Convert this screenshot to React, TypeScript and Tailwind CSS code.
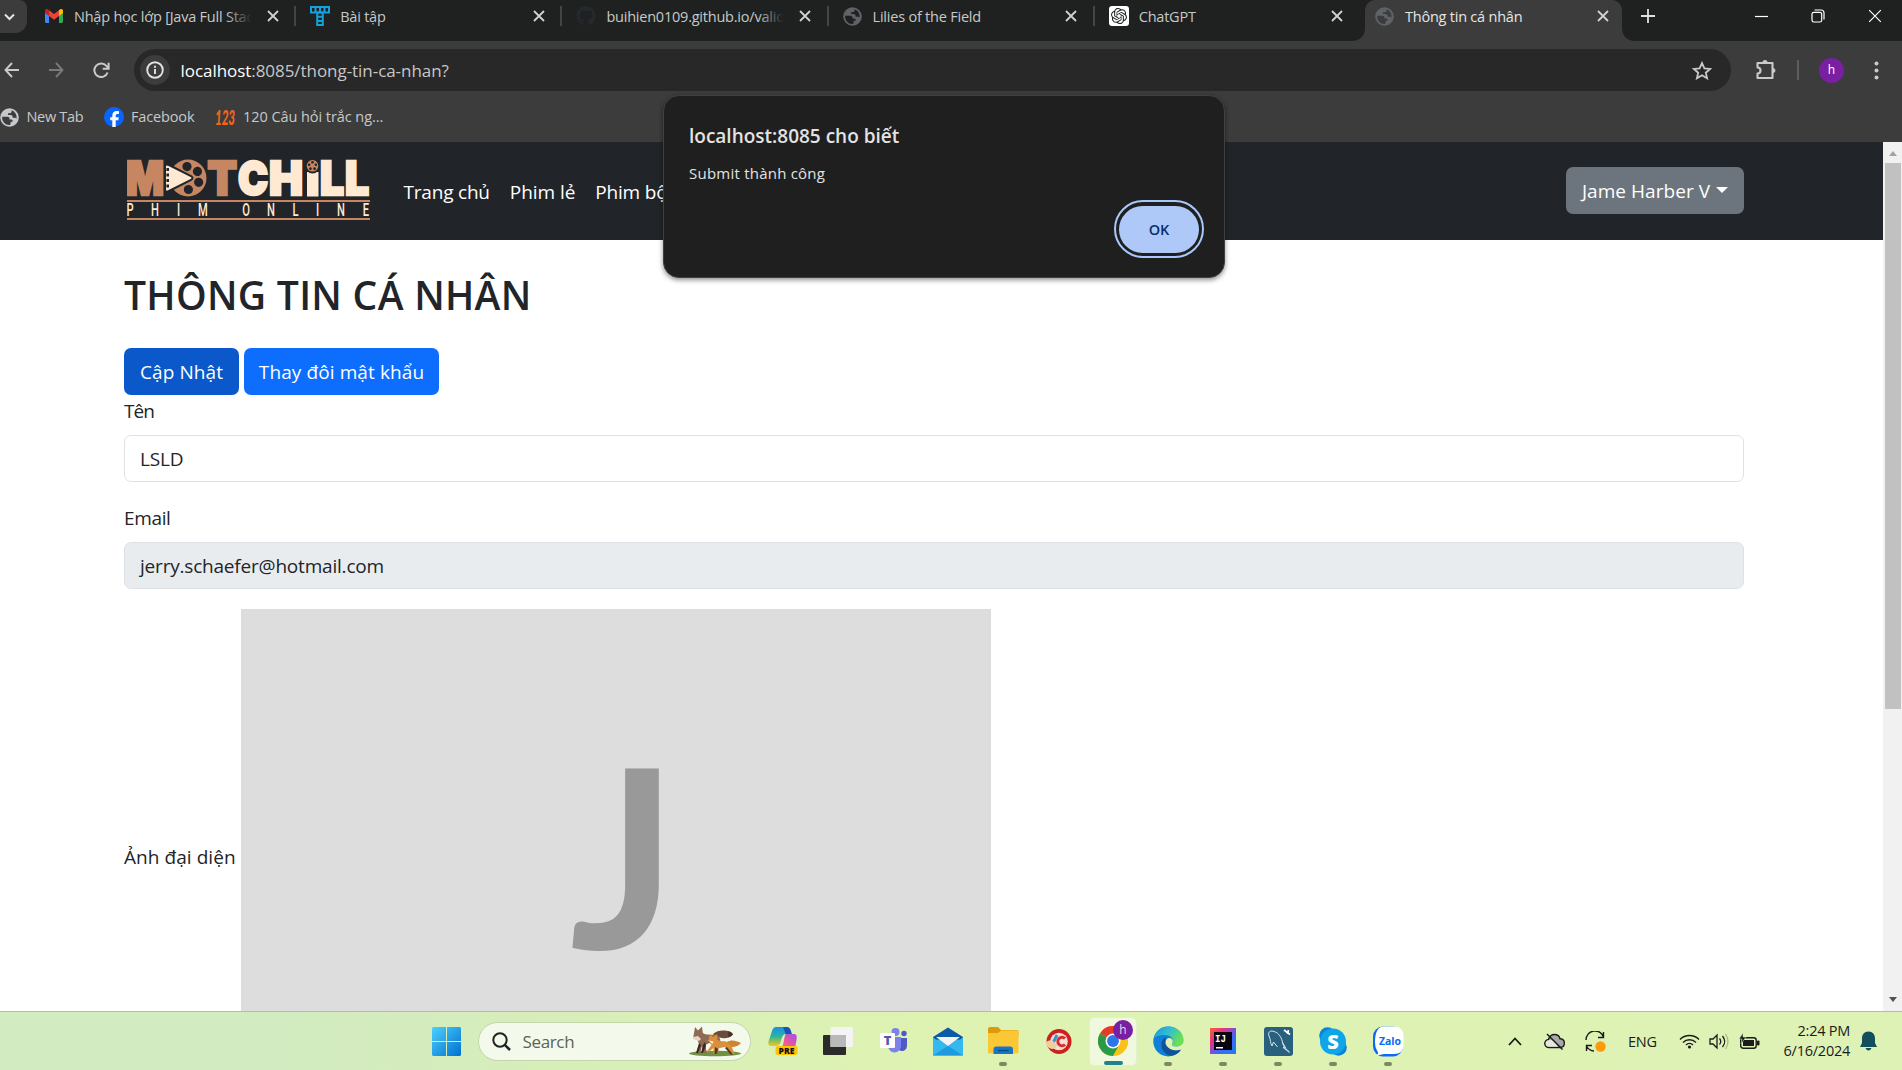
import type { ReactNode } from "react";
import { FaGithub } from "react-icons/fa";
import { SiOpenai } from "react-icons/si";

/* ---------- small glyphs ---------- */

function Cross({ size = 12, w = 1.8 }: { size?: number; w?: number }) {
  return (
    <svg width={size} height={size} viewBox="0 0 12 12" stroke="currentColor" strokeWidth={w} fill="none">
      <path d="M1 1l10 10M11 1L1 11" />
    </svg>
  );
}

function Globe({ color, ink }: { color: string; ink: string }) {
  return (
    <svg width="19" height="19" viewBox="0 0 20 20">
      <circle cx="10" cy="10" r="9.8" fill={color} />
      <path
        d="M2.2 9.2h5.6c1.3 0 2.2.8 2.2 2v.9h1.4c1.2 0 2 .7 2 1.9v.6h-2.2v1.6c0 .9-.5 1.5-1.6 1.8A8 8 0 0 1 2.2 9.2z"
        fill={ink}
      />
      <path
        d="M12.2 2.3v1.2c0 1.2-.8 2-2 2H8.400v1.800h2.900c1.200 0 2 .8 2 2v1h2.200c.9 0 1.600.5 1.900 1.300A8 8 0 0 0 12.2 2.300z"
        fill={ink}
      />
    </svg>
  );
}

function Gmail() {
  return (
    <svg width="18" height="14" viewBox="0 0 18 14">
      <path d="M0 2v10.800c0 .7.500 1.200 1.200 1.200H4V5z" fill="#4285f4" />
      <path d="M18 2v10.800c0 .7-.5 1.200-1.200 1.200H14V5z" fill="#34a853" />
      <path d="M14 1.200V7l4-3V1.800C18 .2 16.200-.5 15 .4z" fill="#fbbc04" />
      <path d="M4 7V1.200L9 5l5-3.800V7l-5 3.800z" fill="#ea4335" />
      <path d="M0 1.800V4l4 3V1.200L3 .4C1.800-.5 0 .2 0 1.800z" fill="#c5221f" />
    </svg>
  );
}

function GridT() {
  return (
    <svg width="20" height="20" viewBox="0 0 20 20" fill="none" stroke="#14a0dc" strokeWidth="2">
      <rect x="1" y="1" width="18" height="5.500" />
      <path d="M5.500 1v5.500M10 1v5.500M14.500 1v5.500" />
      <rect x="7.200" y="6.500" width="5.600" height="12.500" />
      <path d="M7.200 10.700h5.600M7.200 14.900h5.600" />
    </svg>
  );
}

/* ---------- browser tabs ---------- */

function Tab({
  icon,
  title,
  divider = true,
  fade = false,
  tone = "text-[#c7c9c8]",
}: {
  icon: ReactNode;
  title: string;
  divider?: boolean;
  fade?: boolean;
  tone?: string;
}) {
  return (
    <div className="relative flex h-[32px] w-[266.200px] shrink-0 items-center pl-[14px]">
      <span className="flex h-5 w-5 shrink-0 items-center justify-center">{icon}</span>
      <span className={`ml-[10px] w-[178.500px] overflow-hidden whitespace-nowrap pt-px text-[14.500px] leading-[22px] tracking-[-0.220px] ${tone}`}>{title}</span>
      <span className="ml-[14px] flex text-[#d0d2d1]">
        <Cross />
      </span>
      {fade && <span className="absolute left-[196px] top-1 h-6 w-[27px] bg-linear-to-r from-transparent to-[#1f2120] to-95%" />}
      {divider && <span className="absolute right-0 top-[6px] h-5 w-[2px] bg-[#434544]" />}
    </div>
  );
}

function TabStrip() {
  return (
    <div className="flex h-[41px] shrink-0 bg-[#1f2120]">
      <div className="flex h-[33px] w-[30px] shrink-0">
        <div className="flex w-[27px] items-center rounded-br-[12px] rounded-tr-[8px] bg-[#3c3c3c] pl-1">
          <svg width="11" height="8" viewBox="0 0 11 8" fill="none" stroke="#e3e3e3" strokeWidth="2">
            <path d="M1 1.500l4.500 4.500L10 1.500" />
          </svg>
        </div>
      </div>
      <Tab icon={<Gmail />} title="Nhập học lớp [Java Full Stack]" fade />
      <Tab icon={<GridT />} title="Bài tập" />
      <Tab icon={<FaGithub size={20} color="#24292f" />} title="buihien0109.github.io/validate" fade />
      <Tab icon={<Globe color="#5f6368" ink="#1f2120" />} title="Lilies of the Field" />
      <Tab
        icon={
          <span className="flex h-5 w-5 items-center justify-center rounded-[3px] bg-white">
            <SiOpenai size={16} color="#222" />
          </span>
        }
        title="ChatGPT"
        divider={false}
      />
      <div className="relative ml-[4px] flex h-[41px] w-[257px] shrink-0 rounded-t-[10px] bg-[#3c3c3c]">
        <svg className="absolute -left-[13px] bottom-0" width="13" height="13" viewBox="0 0 13 13">
          <path d="M13 0v13H0C7.500 13 13 8 13 0z" fill="#3c3c3c" />
        </svg>
        <svg className="absolute -right-[13px] bottom-0" width="13" height="13" viewBox="0 0 13 13">
          <path d="M0 0v13h13C5.500 13 0 8 0 0z" fill="#3c3c3c" />
        </svg>
        <div className="-ml-[4px]">
          <Tab icon={<Globe color="#5f6368" ink="#3c3c3c" />} title="Thông tin cá nhân" divider={false} tone="text-[#e6e6e6]" />
        </div>
      </div>
      <div className="flex h-[32px] grow items-center text-[#e0e0e0]">
        <svg className="ml-[19px]" width="14" height="14" viewBox="0 0 14 14" stroke="currentColor" strokeWidth="1.800">
          <path d="M7 0v14M0 7h14" />
        </svg>
        <svg className="ml-[100px]" width="13" height="13" viewBox="0 0 13 13" stroke="white" strokeWidth="1.200">
          <path d="M0 6.500h13" />
        </svg>
        <svg className="ml-[43px]" width="14" height="14" viewBox="0 0 14 14" stroke="white" strokeWidth="1.200" fill="none">
          <rect x="1" y="3.300" width="9.700" height="9.700" rx="1.800" />
          <path d="M3.500 1h6.500a3 3 0 0 1 3 3v6.500" />
        </svg>
        <span className="ml-[43px] flex text-white">
          <Cross size={14} w={1} />
        </span>
      </div>
    </div>
  );
}

/* ---------- address bar and bookmarks ---------- */

function Toolbar() {
  return (
    <div className="flex h-[58px] shrink-0 items-center bg-[#3c3c3c] text-[#c9cbca]">
      <svg className="ml-[4px] shrink-0" width="15" height="16" viewBox="0 0 15 16" fill="none" stroke="currentColor" strokeWidth="1.900">
        <path d="M15 8H1.500M8 1L1.500 8L8 15" />
      </svg>
      <svg className="ml-[30px] shrink-0 text-[#7a7a7a]" width="15" height="16" viewBox="0 0 15 16" fill="none" stroke="currentColor" strokeWidth="1.900">
        <path d="M0 8h13.500M7 1l6.500 7L7 15" />
      </svg>
      <svg className="ml-[29px] shrink-0" width="17" height="17" viewBox="0 0 17 17" fill="none" stroke="currentColor" strokeWidth="2">
        <path d="M14.600 10.500A6.800 6.800 0 1 1 13.500 4L15.500 6" />
        <path d="M15.600 .8v5.900H9.700" />
      </svg>
      <div className="ml-[24px] flex h-[42px] w-[1597px] shrink-0 items-center rounded-full bg-[#282828]">
        <span className="ml-[6px] flex h-[30px] w-[30px] items-center justify-center rounded-full bg-[#3c3c3c]">
          <svg width="18" height="18" viewBox="0 0 18 18" fill="none" stroke="#e3e3e3" strokeWidth="1.900">
            <circle cx="9" cy="9" r="7.800" />
            <path d="M9 8v5M9 4.800v1.900" />
          </svg>
        </span>
        <span className="ml-[10.500px] pt-px text-[17px] tracking-[-0.050px] text-[#c7c7c7]">
          <span className="text-white">localhost</span>:8085/thong-tin-ca-nhan?
        </span>
        <svg className="ml-auto mr-[19px]" width="20" height="19" viewBox="0 0 20 19" fill="none" stroke="currentColor" strokeWidth="1.800">
          <path d="M10 2l2.400 5.300 5.800.6-4.400 3.800 1.300 5.600L10 14.300l-5.100 3 1.300-5.600L1.800 7.900l5.800-.6z" />
        </svg>
      </div>
      <svg className="ml-[24px] shrink-0" width="22" height="22" viewBox="0 0 22 22">
        <path d="M2.500 4h15v15h-15v-4.500a3 3 0 0 0 0-6z" fill="none" stroke="currentColor" strokeWidth="2.100" strokeLinejoin="round" />
        <path d="M7.500 3.500a2.500 2.500 0 0 1 5 0zM18 9a2.500 2.500 0 0 1 0 5z" fill="currentColor" />
      </svg>
      <span className="ml-[20px] h-5 w-[2px] shrink-0 bg-[#5c5e5e]" />
      <span className="ml-[20px] flex h-[25px] w-[25px] shrink-0 items-center justify-center rounded-full bg-[#7b1fa2] text-[12px] text-white">h</span>
      <svg className="ml-[30px] shrink-0" width="5" height="19" viewBox="0 0 5 19" fill="currentColor">
        <circle cx="2.500" cy="2.500" r="2" />
        <circle cx="2.500" cy="9.500" r="2" />
        <circle cx="2.500" cy="16.500" r="2" />
      </svg>
    </div>
  );
}

function Bookmarks() {
  return (
    <div className="flex h-[43px] shrink-0 items-center bg-[#3c3c3c] pb-[7px] text-[14.500px] tracking-[-0.300px] text-[#c7c9c8]">
      <Globe color="#c5c9ce" ink="#3c3c3c" />
      <span className="ml-[7.500px] w-[77.500px]">New Tab</span>
      <svg width="20" height="20" viewBox="0 0 20 20">
        <circle cx="10" cy="10" r="10" fill="#0866ff" />
        <path d="M8.300 20v-6.700H6.200v-3h2.100V9c0-3.300 1.500-4.900 4.700-4.900.6 0 1.600.1 2 .2V7h-1.100c-1.600 0-2.200.6-2.200 2.100v1.200h3.100l-.5 3h-2.600V20z" fill="white" />
      </svg>
      <span className="ml-[7px] w-[84px] tracking-[-0.150px]">Facebook</span>
      <svg width="20" height="18" viewBox="0 0 20 18">
        <text x="0" y="16.500" textLength="20" lengthAdjust="spacingAndGlyphs" fill="#f2661c" fontFamily="Lato, sans-serif" fontWeight="900" fontStyle="italic" fontSize="21">
          123
        </text>
      </svg>
      <span className="ml-[8px] tracking-[-0.060px]">120 Câu hỏi trắc ng...</span>
    </div>
  );
}

/* ---------- web page ---------- */

function Logo() {
  const tag: [string, number][] = [
    ["P", 3], ["H", 28], ["I", 51.5], ["M", 76], ["O", 119], ["N", 144], ["L", 168.500], ["I", 190.500], ["N", 214], ["E", 239],
  ];
  return (
    <svg width="244" height="62" viewBox="0 0 244 62">
      <g fontFamily="Inter, sans-serif" fontWeight="900" fontSize="47" strokeWidth="2.600">
        <g fill="#c68662" stroke="#c68662">
          <text x="-1" y="36.200" textLength="38" lengthAdjust="spacingAndGlyphs">M</text>
          <text x="80.500" y="36.200" textLength="29.500" lengthAdjust="spacingAndGlyphs">T</text>
        </g>
        <g fill="#ffe9d2" stroke="#ffe9d2">
          <text x="111" y="36.200" textLength="30" lengthAdjust="spacingAndGlyphs">C</text>
          <text x="142" y="36.200" textLength="34" lengthAdjust="spacingAndGlyphs">H</text>
          <text x="193" y="36.200" textLength="24" lengthAdjust="spacingAndGlyphs">L</text>
          <text x="218" y="36.200" textLength="24" lengthAdjust="spacingAndGlyphs">L</text>
        </g>
      </g>
      <rect x="180" y="13" width="11.500" height="24.500" fill="#ffe9d2" />
      <circle cx="185.500" cy="7" r="7.500" fill="#212529" />
      <circle cx="185.500" cy="6.800" r="5.800" fill="#c68662" />
      {[0, 72, 144, 216, 288].map((a) => (
        <circle key={a} cx="185.500" cy="3.300" r="1.300" fill="#212529" transform={`rotate(${a} 185.500 6.800)`} />
      ))}
      <circle cx="61" cy="19" r="18.500" fill="#c68662" />
      {[-5, 55, 112, 178].map((a) => (
        <circle key={a} cx="61" cy="7.500" r="4.600" fill="#212529" transform={`rotate(${a} 61 19)`} />
      ))}
      <path d="M38 6.500q1-2 4-.5l22 11q3 2 0 4l-22 11q-3 1.500-4-.5z" fill="#ffe9d2" stroke="#212529" strokeWidth="2" />
      <path d="M40.700 9v22" stroke="#212529" strokeWidth="2.600" strokeDasharray="3 2.500" />
      <path d="M0 42h243M0 60h243" stroke="#c68662" strokeWidth="2.200" />
      <g fill="#ffe9d2" fontFamily="Roboto, sans-serif" fontWeight="500" fontSize="18" textAnchor="middle">
        {tag.map(([c, x], i) => (
          <text key={i} x="0" y="57.500" transform={`translate(${x} 0) scale(.62 1)`}>
            {c}
          </text>
        ))}
      </g>
    </svg>
  );
}

function Navbar() {
  return (
    <div className="flex h-[98px] shrink-0 items-center bg-[#212529] pl-[124px] pr-[139px] pb-px text-[19px] text-white">
      <div className="ml-[3px] mb-px flex">
        <Logo />
      </div>
      <nav className="ml-[32.500px] mt-[4px] flex gap-[20px] whitespace-nowrap tracking-[-0.200px]">
        <span>Trang chủ</span>
        <span className="tracking-[-0.050px]">Phim lẻ</span>
        <span>Phim bộ</span>
      </nav>
      <button className="ml-auto flex h-[47px] w-[178px] items-center justify-center rounded-[7px] bg-[#6c757d] pt-[2px] tracking-[0.050px]">
        Jame Harber V
        <span className="mb-[4px] ml-[6px] border-x-6 border-t-6 border-x-transparent border-t-white" />
      </button>
    </div>
  );
}

function ProfilePage() {
  return (
    <div className="flex grow flex-col overflow-hidden bg-white pl-[124px] pr-[139px] text-[19px] tracking-[-0.200px] text-[#212529]">
      <h1 className="mt-[31px] h-[49px] shrink-0 text-[39px] font-semibold leading-[48px] tracking-[0.300px]">THÔNG TIN CÁ NHÂN</h1>
      <div className="mt-[28px] flex shrink-0 gap-[5px] tracking-[0.100px] text-white">
        <button className="h-[47px] w-[115px] rounded-[7px] bg-[#0a58ca] pt-px">Cập Nhật</button>
        <button className="h-[47px] w-[195px] rounded-[7px] bg-[#0d6efd] pt-px">Thay đôi mật khẩu</button>
      </div>
      <label className="mt-[1px] block h-[30px] shrink-0 leading-[30px] tracking-[-1px]">Tên</label>
      <div className="mt-[9px] flex h-[47px] shrink-0 items-center rounded-[7px] border border-[#dee2e6] px-[15px] pt-px">LSLD</div>
      <label className="mt-[20px] block h-[30px] shrink-0 leading-[32px] tracking-[-0.350px]">Email</label>
      <div className="mt-[10px] flex h-[47px] shrink-0 items-center rounded-[7px] border border-[#dee2e6] bg-[#e9ecef] px-[15px] pt-px">jerry.schaefer@hotmail.com</div>
      <div className="mt-[20px] flex h-[500px] shrink-0 items-center">
        <span className="w-[117px] whitespace-nowrap pb-[4px] tracking-[0.060px]">Ảnh đại diện</span>
        <div className="flex h-[500px] w-[750px] items-center justify-center bg-[#ddd] pb-[15px] pl-[15px] font-[Lato] text-[250px] font-bold leading-none tracking-normal text-[#999]">J</div>
      </div>
    </div>
  );
}

function Scrollbar() {
  return (
    <div className="flex w-[19px] shrink-0 flex-col items-center bg-[#f1f1f1]">
      <span className="mt-[9px] border-x-4 border-b-5 border-x-transparent border-b-[#a3a3a3]" />
      <span className="mt-[7px] h-[546px] w-[16px] bg-[#c1c1c1]" />
      <span className="mt-auto mb-[9px] border-x-4 border-t-5 border-x-transparent border-t-[#505050]" />
    </div>
  );
}

function AlertDialog() {
  return (
    <div className="absolute left-[663px] top-[95px] flex h-[183px] w-[562px] flex-col rounded-[16px] border border-[#3f4140] bg-[#1f1f1f] px-[25px] text-[#e3e3e3] shadow-[0_2px_5px_rgba(0,0,0,0.45)]">
      <div className="mt-[27px] text-[19px] font-semibold leading-[26px] tracking-[0px]">localhost:8085 cho biết</div>
      <div className="mt-[13px] text-[15px] leading-[22px] tracking-[0.230px]">Submit thành công</div>
      <div className="-mr-[5px] mt-[16px] flex h-[58px] w-[90px] items-center justify-center self-end rounded-full border-[2.500px] border-[#a8c7fa]">
        <button className="h-[47px] w-[80px] rounded-full bg-[#aec9f8] pt-px text-[14.500px] font-semibold text-[#062e6f]">OK</button>
      </div>
    </div>
  );
}

/* ---------- taskbar ---------- */

function Foxes() {
  return (
    <svg width="54" height="32" viewBox="0 0 54 32">
      <ellipse cx="27" cy="28.500" rx="26" ry="2.800" fill="#70913f" />
      <path d="M25 9c3-3 8-4 12-3.500 4 .2 7 2 8 4-3 3-7 4.500-11 3.500-4-.5-7-1-9-4z" fill="#6c4b3d" />
      <path d="M40 6.200c3 .5 4.500 1.800 5 3.300-1.500 1.500-3 2.500-4.500 3z" fill="#49332b" />
      <path d="M5.500 11L7 2l3 3.500L14 1.500l.8 6.500c5 3 10 .5 16 3l1.500 4-1 5-1.500 8h-2l-.5-8-6-2-4 2 1.500 8h-2.500L14 21l-2 8H9l2.500-9-2-5-4.500-1.500z" fill="#8e6a55" />
      <path d="M17 17l1 4-3 7h-2l2-8zM11 18l2 2-3 8H8z" fill="#3a2924" />
      <path d="M5 12l5-1 3 3-2 2-6-2.500z" fill="#e8d6c4" />
      <path d="M38 17.500c5-3 9-2.500 15 .5-3 3.500-9 5.500-14 3z" fill="#cf8432" />
      <path d="M20.500 15l1.500-6 3 3 4-3 .5 6c4 2 8 .5 10 2.500l4 3.500 3 8h-2l-5-6-3-1-7 1.500-2 5.500h-2l0-6-5 4h-2l5-7-2-4-3.500-1z" fill="#d98f3b" />
      <path d="M20.500 15.500l5 1-1 2.500z" fill="#fff0d8" />
      <path d="M27 22l-.5 7h2l1.500-5zM39 22l6 7.500h-2.500L37 23z" fill="#5a351c" />
    </svg>
  );
}

function Slot({ children, dot = false }: { children: ReactNode; dot?: boolean }) {
  return (
    <div className="relative flex h-[59px] w-[55px] shrink-0 items-center justify-center">
      {children}
      {dot && <span className="absolute bottom-[5px] h-[4px] w-[8px] rounded-full bg-[#7c8a62]" />}
    </div>
  );
}

function Copilot() {
  return (
    <svg width="30" height="30" viewBox="0 0 30 30">
      <defs>
        <linearGradient id="cpA" x1="0" y1="0" x2="0" y2="1">
          <stop offset="0" stopColor="#1a8fe8" />
          <stop offset=".5" stopColor="#2bb69a" />
          <stop offset="1" stopColor="#f4c91f" />
        </linearGradient>
        <linearGradient id="cpB" x1="1" y1="0" x2="0" y2="1">
          <stop offset="0" stopColor="#a04bf0" />
          <stop offset=".6" stopColor="#ea5a9a" />
          <stop offset="1" stopColor="#f5853f" />
        </linearGradient>
      </defs>
      <path d="M8 1h10c3 0 4 3 5 7h-5c-3 0-4 3-5 7-1 3-2 5-5 5H3c-3 0-3-3-2-6l3-9c1-3 2-4 4-4z" fill="url(#cpA)" />
      <path d="M15 1h4c3 0 4 3 5 8h-6z" fill="#1554b8" />
      <path d="M18 8h8c3 0 3 3 2.500 6L27 22H12c3 0 3-4 4-8 .5-3 1-5 2-6z" fill="url(#cpB)" />
      <rect x="7.500" y="20" width="22" height="9" rx="2" fill="#ffc400" />
      <text x="10.500" y="27.500" textLength="16" fontFamily="Open Sans, sans-serif" fontWeight="800" fontSize="8.500" fill="#111">PRE</text>
    </svg>
  );
}

function Teams() {
  return (
    <svg width="27" height="28" viewBox="0 0 27 28">
      <circle cx="15.500" cy="5" r="4" fill="#7b83eb" />
      <circle cx="24" cy="6.500" r="2.700" fill="#5059c9" />
      <path d="M19 11h8v8a5 5 0 0 1-8 4z" fill="#5059c9" />
      <path d="M8 10h13v9a6.500 6.500 0 0 1-13 0z" fill="#7b83eb" />
      <rect x="0" y="6" width="15" height="15" rx="1" fill="white" />
      <text x="7.600" y="18.200" textAnchor="middle" fontFamily="Open Sans, sans-serif" fontWeight="800" fontSize="13" fill="#5558af">T</text>
    </svg>
  );
}

function Mail() {
  return (
    <svg width="30" height="29" viewBox="0 0 30 29">
      <path d="M0 10L15 .5 30 10z" fill="#0a5ba8" />
      <path d="M0 10h30v18.500H0z" fill="#35b8ee" />
      <path d="M0 10h30l-3 2.500H3z" fill="#0a4f96" />
      <path d="M3 10h24L15 19z" fill="#f3f3f3" />
      <path d="M10 22l5-3 15 9.500H0z" fill="#1f9ae0" />
    </svg>
  );
}

function Explorer() {
  return (
    <svg width="31" height="28" viewBox="0 0 31 28">
      <path d="M0 2q0-2 2-2h8l3 3h16q1.500 0 1.500 2v5H0z" fill="#dc9a0c" />
      <path d="M0 6h10l3-2.500h16q1.500 0 1.500 2V25q0 1.500-1.500 1.500H1.500Q0 26.500 0 25z" fill="#fcc735" />
      <path d="M5.500 27v-4.500q0-3 3-3h13.500q3 0 3 3V27z" fill="#1675c9" />
      <path d="M10 23.500h10.500" stroke="#0a4b8a" strokeWidth="1.500" />
    </svg>
  );
}

function CCleaner() {
  return (
    <svg width="27" height="27" viewBox="0 0 27 27">
      <circle cx="14" cy="13.500" r="12.500" fill="#c9211e" />
      <circle cx="14" cy="13.500" r="8.800" fill="#f7dcd6" />
      <path d="M20 10.500a4.200 4.200 0 1 0 0 6" fill="none" stroke="#d3302c" strokeWidth="3" />
      <path d="M12 7L8 15" stroke="#3c8fd0" strokeWidth="3" />
      <path d="M1 14q4-3 7-1l4 4q-1 4-5 4-4-1-6-4z" fill="#f3cda2" />
    </svg>
  );
}

function ChromeLogo() {
  return (
    <svg width="30" height="30" viewBox="0 0 48 48">
      <circle cx="24" cy="24" r="24" fill="#fbc116" />
      <path d="M24 24L3.200 12A24 24 0 0 1 44.800 12z" fill="#e33b2e" />
      <path d="M3.200 12A24 24 0 0 0 24 48l10.400-18z" fill="#2a9a47" />
      <path d="M24 12h20.800A24 24 0 0 1 24 48l10.400-18z" fill="#fbc116" />
      <circle cx="24" cy="24" r="12" fill="white" />
      <circle cx="24" cy="24" r="9.500" fill="#2f74e8" />
    </svg>
  );
}

function Edge() {
  return (
    <svg width="31" height="31" viewBox="0 0 31 31">
      <defs>
        <linearGradient id="eg" x1="0" y1="0" x2="1" y2=".5">
          <stop offset="0" stopColor="#1d8fdc" />
          <stop offset=".5" stopColor="#2fbfd0" />
          <stop offset="1" stopColor="#6ee04f" />
        </linearGradient>
      </defs>
      <circle cx="15.300" cy="15.500" r="15" fill="#0f80d7" />
      <path d="M.5 13C2 5 8 .5 15.500.5c9 0 15 6.500 15 13 0 4.500-3.500 7-7.500 7-3 0-4-1-4-2 0-1 1-1.500 1-3.500 0-3-3-6-8-6S2 10 .5 13z" fill="url(#eg)" />
      <path d="M12.500 11c-3 2-4.500 5-4 9 .6 5.500 5 9.500 10 9.800 4-.5 7.500-3 9.500-6.300-6 2.500-13 .5-15-5-.7-2.500-.7-5-.5-7.500z" fill="#11529d" />
      <path d="M19 18.500c0 1 1 2 4 2 3.500 0 6.500-1.500 7.800-5.500v7l-3 2c-6 2-13 0-15-5.500-.8-4 1-6.500 3.500-6.500 2 0 3.500 1.500 3.500 3 0 2-.8 2.500-.8 3.500z" fill="#def2b4" />
      <path d="M12.800 18c2 5.500 9 7.800 15 5.500l-2 2.700c-6 2-12.500-2-13-8.200z" fill="#11529d" />
    </svg>
  );
}

function IntelliJ() {
  return (
    <svg width="26" height="26" viewBox="0 0 26 26">
      <defs>
        <linearGradient id="ij" x1="0" y1="0" x2="1" y2="1">
          <stop offset="0" stopColor="#f0682a" />
          <stop offset=".3" stopColor="#e6318b" />
          <stop offset=".6" stopColor="#4067f5" />
          <stop offset="1" stopColor="#1d7ff0" />
        </linearGradient>
      </defs>
      <rect width="26" height="26" fill="url(#ij)" />
      <rect x="4" y="4" width="18" height="18" fill="#090510" />
      <text x="5" y="13.500" textLength="11" lengthAdjust="spacingAndGlyphs" fontFamily="Liberation Mono, monospace" fontWeight="700" fontSize="10.500" fill="white">IJ</text>
      <rect x="6" y="19" width="7" height="1.500" fill="white" />
    </svg>
  );
}

function MySQL() {
  return (
    <svg width="29" height="29" viewBox="0 0 29 29">
      <rect width="29" height="29" rx="3" fill="#28607e" />
      <path d="M8 19c-2-3-1-6-3-10-1-3 0-5 3-5 6 1 9 5 10.500 11 .5 3 1 5 7 10M8 19l1.500-4 4 5M18.500 15.500l3 5-2.500 0 6.500 5" stroke="#d6e5ec" strokeWidth="1" fill="none" />
      <path d="M20 3l6 4.500M24.500 3l-1 4" stroke="white" strokeWidth="1.700" />
    </svg>
  );
}

function Skype() {
  return (
    <svg width="28" height="29" viewBox="0 0 28 29">
      <circle cx="8.500" cy="8.500" r="8.300" fill="#0a84d8" />
      <circle cx="19.500" cy="20.500" r="8.300" fill="#0a84d8" />
      <circle cx="14" cy="14.500" r="13" fill="#0ea5e9" />
      <text x="14" y="21.700" textAnchor="middle" fontFamily="Open Sans, sans-serif" fontWeight="800" fontSize="20" fill="white">S</text>
    </svg>
  );
}

function Zalo() {
  return (
    <svg width="31" height="31" viewBox="0 0 31 31">
      <rect x="0" y=".5" width="30" height="30" rx="10" fill="#0a6af5" />
      <path d="M11 .5h10q9.500 0 9.500 9.500v9q0 9-9.500 9H11l-7 1.500q2-2.500 0-5-2-3-2-8Q2 .5 11 .5z" fill="white" />
      <text x="6" y="18.500" textLength="22" lengthAdjust="spacingAndGlyphs" fontFamily="Open Sans, sans-serif" fontWeight="700" fontSize="10.500" fill="#0a6af5">Zalo</text>
    </svg>
  );
}

function Tray() {
  return (
    <div className="ml-auto flex shrink-0 items-center text-[#1b1b1b]">
      <svg width="14" height="9" viewBox="0 0 14 9" fill="none" stroke="currentColor" strokeWidth="1.800">
        <path d="M1 8l6-6.500L13 8" />
      </svg>
      <svg className="ml-[22px]" width="21" height="17" viewBox="0 0 21 17">
        <path d="M5 14.500a4 4 0 0 1-.5-8C5.500 3 8 1.500 10.500 1.500c3 0 5 1.500 5.500 4.300 6 .3 5.500 8.700 0 8.700z" fill="#a9a9a9" stroke="#1b1b1b" strokeWidth="1.400" />
        <path d="M5 13.800a3.200 3.200 0 0 1 0-6.500c3-1.500 6 1 9 6.500z" fill="#e4e8dd" />
        <path d="M3 1l15.500 15.500" stroke="#1b1b1b" strokeWidth="1.500" />
      </svg>
      <svg className="ml-[20px]" width="21" height="21" viewBox="0 0 21 21" fill="none" stroke="#1b1b1b" strokeWidth="1.400">
        <path d="M1 9a9 9 0 0 1 17.500-3M18.500 1v5.500H13M9 20a9 9 0 0 1-7.500-5M1.500 20v-5.500H7" />
        <circle cx="15.500" cy="15.500" r="5.200" fill="#ff9a0a" stroke="none" />
      </svg>
      <span className="ml-[22px] w-[28px] pt-px text-[14.500px] tracking-[-0.200px]">ENG</span>
      <svg className="ml-[23px]" width="21" height="16" viewBox="0 0 21 16" fill="none" stroke="currentColor" strokeWidth="1.400">
        <path d="M1 6.500a13.400 13.400 0 0 1 19 0M4 9.500a9.200 9.200 0 0 1 13 0M7 12a5 5 0 0 1 7 0" />
        <circle cx="10.500" cy="14" r="1.600" fill="currentColor" stroke="none" />
      </svg>
      <svg className="ml-[9px]" width="20" height="17" viewBox="0 0 20 17" fill="none" stroke="currentColor" strokeWidth="1.300">
        <path d="M1 6h3l4-4v13l-4-4H1z" />
        <path d="M10.500 5.500q2.500 3 0 6M13.500 3q4.500 5.500 0 11" />
        <path d="M16.500 1q5 7.500 0 15" stroke="#a9b98a" />
      </svg>
      <svg className="ml-[10px]" width="21" height="17" viewBox="0 0 21 17">
        <rect x="1.700" y="4.700" width="15.500" height="10.500" rx="2.500" fill="none" stroke="#1b1b1b" strokeWidth="1.400" />
        <rect x="4" y="7" width="11" height="6" fill="#1b1b1b" />
        <rect x="18" y="7.500" width="2.500" height="5" rx="1" fill="#1b1b1b" />
        <path d="M4 0L0 6h3l-1 5 5-7H4z" fill="#1b1b1b" stroke="#def0b4" strokeWidth=".5" />
      </svg>
      <div className="ml-[14px] w-[76px] text-right text-[14.500px] leading-[20px] tracking-[-0.250px]">
        2:24 PM
        <br />
        6/16/2024
      </div>
      <svg className="ml-[10px] mr-[25px]" width="17" height="20" viewBox="0 0 17 20" fill="#14505c">
        <path d="M8.500.5c4.200 0 6.500 3 6.500 7v4.500l2 4H0l2-4V7.500c0-4 2.300-7 6.500-7zM5.500 17h6q-1 2.500-3 2.500t-3-2.500z" />
      </svg>
    </div>
  );
}

function Taskbar() {
  return (
    <div className="flex h-[59px] shrink-0 items-center border-t border-[#b3bf9b] bg-linear-to-r from-[#d2ebc0] from-15% via-[#def2b2] via-48% to-[#dff2b6] pl-[432px]">
      <svg className="shrink-0" width="29" height="29" viewBox="0 0 29 29">
        <defs>
          <linearGradient id="win" x1="0" y1="0" x2="1" y2="1">
            <stop offset="0" stopColor="#4fd0fc" />
            <stop offset="1" stopColor="#0070d0" />
          </linearGradient>
        </defs>
        <path d="M1 0h13v14H0V1zM15 0h13l1 1v13H15zM0 15h14v14H1l-1-1zM15 15h14v13l-1 1H15z" fill="url(#win)" />
      </svg>
      <div className="ml-[16.500px] flex h-[39px] w-[273.500px] shrink-0 items-center rounded-full border border-[#c3d5aa] bg-[#f3faeb] pl-[13px]">
        <svg width="19" height="19" viewBox="0 0 19 19" fill="none" stroke="#222" strokeWidth="2">
          <circle cx="8" cy="8" r="6.700" />
          <path d="M12.800 12.800l5.200 5.200" strokeWidth="2.500" />
        </svg>
        <span className="ml-[12px] pt-px text-[17px] tracking-[-0.350px] text-[#5c6356]">Search</span>
        <span className="ml-auto mr-[8px] flex">
          <Foxes />
        </span>
      </div>
      <div className="ml-[4.500px] flex shrink-0">
        <Slot><Copilot /></Slot>
        <Slot>
          <svg width="30" height="28" viewBox="0 0 30 28">
            <rect x="0" y="8" width="23" height="20" rx="1" fill="#2b2c29" />
            <rect x="7.500" y="0" width="22.500" height="20" rx="1" fill="#f4f4f4" />
            <path d="M7.500 8H23v12H7.500z" fill="#b9b9b9" />
          </svg>
        </Slot>
        <Slot><Teams /></Slot>
        <Slot><Mail /></Slot>
        <Slot dot><Explorer /></Slot>
        <Slot><CCleaner /></Slot>
        <Slot>
          <div className="relative flex h-[49px] w-[48px] items-center justify-center rounded-[5px] border border-[#e3efcf] bg-[#f0f8dd]">
            <ChromeLogo />
            <span className="absolute right-[3px] top-[2px] flex h-[20px] w-[20px] items-center justify-center rounded-full bg-[#7b1fa2] text-[12px] text-[#e8d5f0]">h</span>
            <span className="absolute bottom-0 h-[4px] w-[19px] rounded-full bg-[#24818c]" />
          </div>
        </Slot>
        <Slot dot><Edge /></Slot>
        <Slot dot><IntelliJ /></Slot>
        <Slot dot><MySQL /></Slot>
        <Slot dot><Skype /></Slot>
        <Slot dot><Zalo /></Slot>
      </div>
      <Tray />
    </div>
  );
}

export default function App() {
  return (
    <div className="relative flex h-[1070px] w-[1902px] flex-col overflow-hidden font-['Open_Sans','Noto_Sans',sans-serif]">
      <TabStrip />
      <Toolbar />
      <Bookmarks />
      <div className="flex h-[869px] shrink-0">
        <div className="flex grow flex-col overflow-hidden">
          <Navbar />
          <ProfilePage />
        </div>
        <Scrollbar />
      </div>
      <Taskbar />
      <AlertDialog />
    </div>
  );
}
